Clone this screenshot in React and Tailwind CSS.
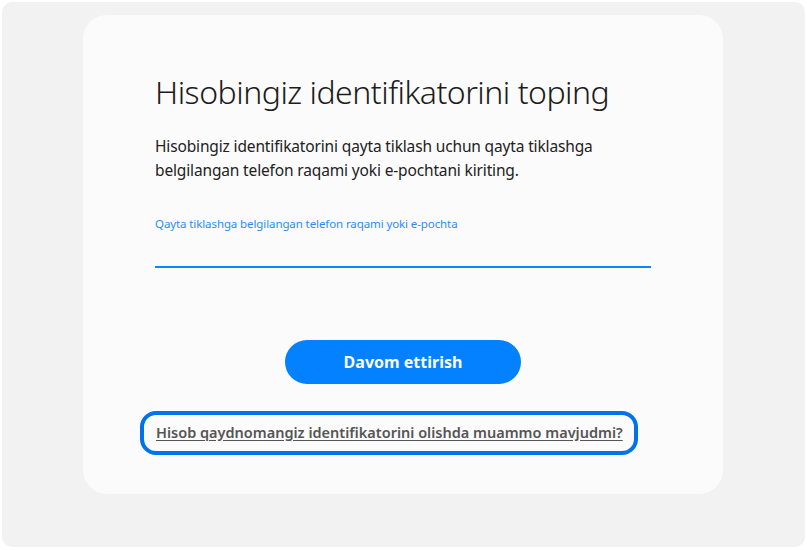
export default function App() {
  return (
    <div
      className="w-[807px] h-[550px] bg-white p-[2px] pb-[3px]"
      style={{ fontFamily: '"Noto Sans", "Open Sans", sans-serif' }}
    >
      <div className="h-full rounded-[10px] bg-[#f2f2f2] pt-[13px] px-[81px]">
        <div className="w-[640px] h-[479px] rounded-[24px] bg-[#fbfbfb] px-[72px] pt-[57px]">
          <h1 className="text-[32px] leading-[40px] font-light text-[#1c1c1c] tracking-[-0.5px]">
            Hisobingiz identifikatorini toping
          </h1>
          <p className="mt-[22px] text-[15.5px] leading-[24px] text-[#222] tracking-[-0.15px]">
            Hisobingiz identifikatorini qayta tiklash uchun qayta tiklashga belgilangan telefon raqami yoki e-pochtani kiriting.
          </p>
          <div className="mt-[34px]">
            <label className="block text-[11.5px] leading-[16px] text-[#2a8bff] tracking-[-0.1px]">
              Qayta tiklashga belgilangan telefon raqami yoki e-pochta
            </label>
            <input className="w-full h-[32px] mt-[4px] bg-transparent outline-none border-b-2 border-[#0a84ff] text-[16px]" />
          </div>
          <div className="mt-[72px] flex justify-center">
            <button className="w-[236px] h-[44px] rounded-full bg-[#0381fe] text-white text-[16px] font-bold">
              Davom ettirish
            </button>
          </div>
          <div className="mt-[27px] -mx-[15px]">
            <a
              href="#"
              className="flex items-center w-[498px] h-[44px] px-[12px] rounded-[16px] border-4 border-[#0072eb] text-[14.5px] font-semibold text-[#555] underline underline-offset-2 whitespace-nowrap"
            >
              Hisob qaydnomangiz identifikatorini olishda muammo mavjudmi?
            </a>
          </div>
        </div>
      </div>
    </div>
  );
}
